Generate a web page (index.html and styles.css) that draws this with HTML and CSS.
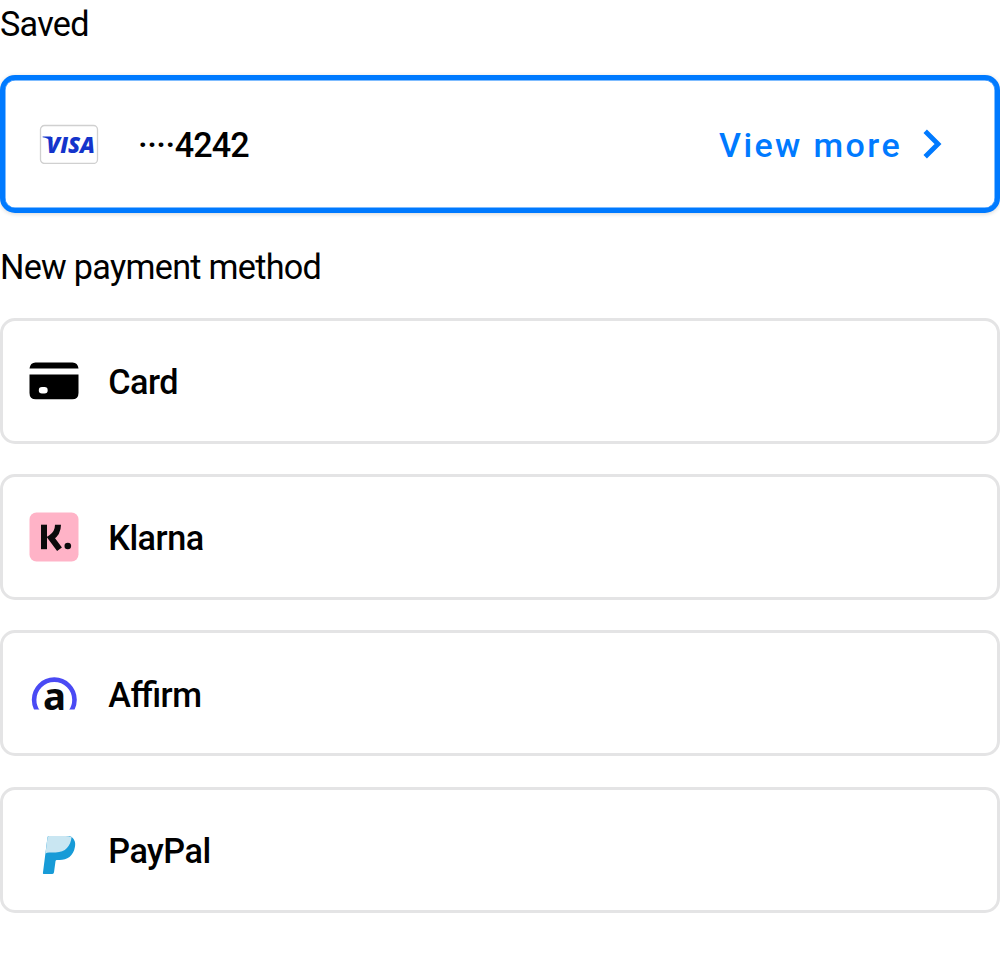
FILE: index.html
```html
<!DOCTYPE html>
<html lang="en">
<head>
<meta charset="utf-8">
<title>Payment methods</title>
<link rel="stylesheet" href="styles.css">
</head>
<body>
<main class="sheet">
  <h2 class="heading">Saved</h2>
  <section class="row selected">
    <svg class="visa" width="60" height="40" viewBox="0 0 60 40">
      <rect x="1.5" y="1.5" width="57" height="38" rx="4" fill="#fff" stroke="#d0d0d0" stroke-width="1.3"/>
      <text x="7.5" y="28.8" class="visa-word" textLength="48.5" lengthAdjust="spacingAndGlyphs">VISA</text>
      <path d="M3.6 12.5H12L13.5 18.5C10.5 15.3 7 13.8 3.6 13.3Z" fill="#1434cb"/>
    </svg>
    <span class="label number"><span class="dots">····</span>4242</span>
    <a class="more"><span>View more</span>
      <svg width="20" height="30" viewBox="0 0 20 30"><path d="M2.2 2.3 15 15 2.2 27.7" fill="none" stroke="#007aff" stroke-width="4.9"/></svg>
    </a>
  </section>
  <h2 class="heading">New payment method</h2>
  <div class="methods">
    <section class="row">
      <svg class="icon" width="50" height="50" viewBox="0 0 50 50">
        <path d="M0.5 12.5C1 8.5 3 6.5 6.5 6.5H43.5C47 6.5 49 8.5 49.5 12.5Z"/>
        <path fill-rule="evenodd" d="M.5 18.5H49.5V37Q49.5 43.3 43.2 43.3H6.8Q.5 43.3.5 37ZM13 31a3.2 3.2 0 0 0 0 6.4H15.5a3.2 3.2 0 0 0 0-6.4Z"/>
      </svg>
      <span class="label">Card</span>
    </section>
    <section class="row">
      <svg class="icon" width="50" height="50" viewBox="0 0 50 50">
        <rect x=".5" y=".5" width="49" height="49" rx="7" fill="#ffb3c7"/>
        <rect x="12" y="12.7" width="6" height="24.5" fill="#0b0b0c"/>
        <path d="M29 12.7C29 18.7 26.3 22.9 22 25.7L30.5 37.2" fill="none" stroke="#0b0b0c" stroke-width="6"/>
        <circle cx="38.8" cy="34" r="3.3" fill="#0b0b0c"/>
      </svg>
      <span class="label">Klarna</span>
    </section>
    <section class="row">
      <svg class="icon" width="50" height="50" viewBox="0 0 50 50">
        <clipPath id="arc"><rect width="50" height="41.5"/></clipPath>
        <circle clip-path="url(#arc)" cx="25.3" cy="31.8" r="20.2" fill="none" stroke="#4a4af4" stroke-width="4.6"/>
        <text x="14" y="41.5" class="affirm-letter" textLength="23" lengthAdjust="spacingAndGlyphs">a</text>
      </svg>
      <span class="label tight">Affirm</span>
    </section>
    <section class="row">
      <svg class="icon" width="50" height="50" viewBox="0 0 50 50">
        <g transform="translate(.6 4)">
        <path d="M19 7H40C44.5 9 46.5 13 45.3 18C43.8 27 37.5 31 30 31H27.2Q26.1 31 25.9 32.2L24.4 43.3Q24.2 45 22.8 45H14Q13.2 45 13.3 44L17.8 9Q18 7 19 7Z" fill="#179bd7"/>
        <path d="M19.3 7H36Q39.5 7 42 8C41 17 36 23.4 26 23.4H19.5Q17.3 23.4 15.9 24.5L17.8 9.3Q18 7 19.3 7Z" fill="#c9e6f2"/>
        </g>
      </svg>
      <span class="label">PayPal</span>
    </section>
  </div>
</main>
</body>
</html>
```
FILE: styles.css
```css
* { box-sizing: border-box; }
body { margin: 0; background: #fff; color: #000; font-family: Roboto, sans-serif; }
.sheet { display: flex; flex-direction: column; height: 962px; overflow: hidden; padding-top: 4px; }
.heading { margin: 0; font-size: 34.2px; line-height: 41px; font-weight: 400; letter-spacing: -0.71px; }
.row { display: flex; align-items: center; height: 126px; padding: 0 25.5px; background: #fff; border: 3px solid #e4e4e5; border-radius: 15px; }
.row.selected { height: 138px; margin: 30px 0 34px; padding: 0 52px 0 34px; border: 5px solid #007aff; border-radius: 15px; box-shadow: 0 1px 4px rgba(0, 0, 0, 0.16), inset 0 0 0 0.5px #007aff; }
.methods { display: flex; flex-direction: column; gap: 30.3px; padding-top: 29.7px; }
.icon { flex: none; overflow: visible; }
.label { margin-left: 29.8px; padding-top: 3px; font-size: 34.2px; font-weight: 500; line-height: 42px; letter-spacing: -0.5px; }
.tight { font-feature-settings: "liga" 1; }
.number { margin-left: 39px; padding-top: 2px; letter-spacing: -0.9px; }
.dots { letter-spacing: -0.5px; }
.more { display: flex; align-items: center; gap: 20px; margin-left: auto; color: #007aff; font-size: 34px; font-weight: 500; line-height: 42px; letter-spacing: 2.4px; }
.more span { padding-top: 2px; margin-left: -1px; margin-right: 1px; }
.visa-word { font-family: "Open Sans", sans-serif; font-size: 23.5px; font-weight: 800; font-style: italic; fill: #1434cb; }
.affirm-letter { font-family: "Noto Sans", sans-serif; font-size: 37px; font-weight: 700; fill: #050809; }
```
